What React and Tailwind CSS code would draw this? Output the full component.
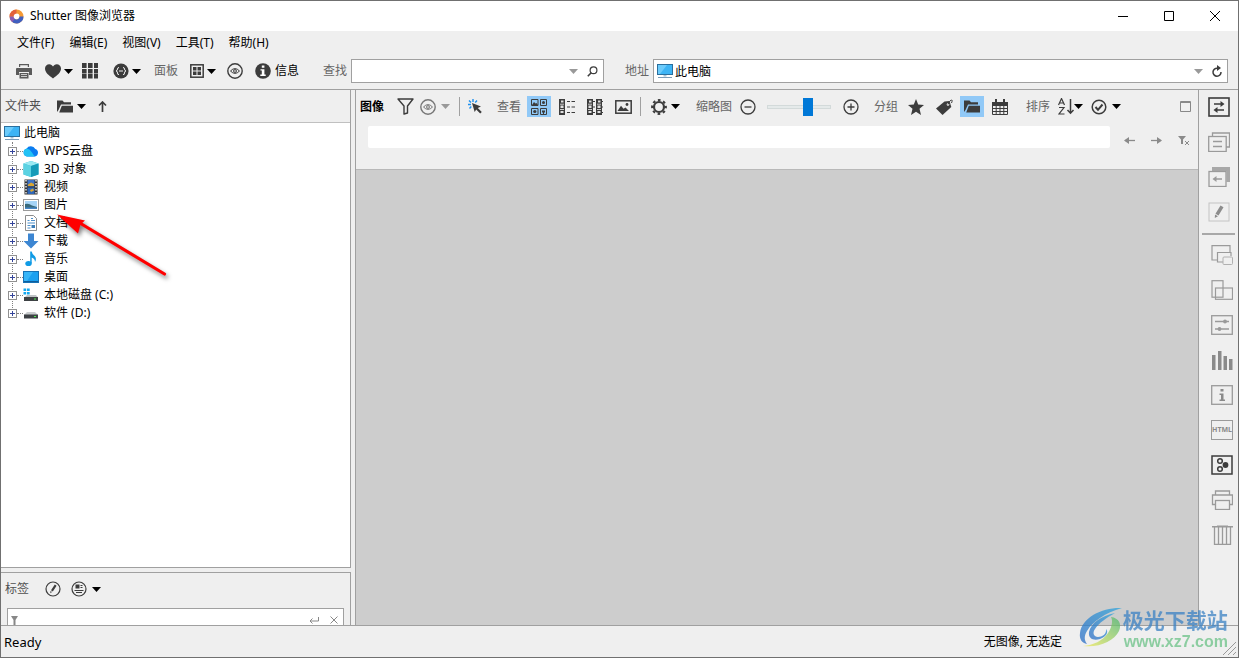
const MENUS = ["文件(F)", "编辑(E)", "视图(V)", "工具(T)", "帮助(H)"]

function Svg({ w = 16, h = 16, className = "", children }) {
  return (
    <svg width={w} height={h} viewBox={`0 0 ${w} ${h}`} fill="none" stroke="currentColor"
      aria-hidden="true" className={`block shrink-0 ${className}`}>
      {children}
    </svg>
  )
}

function Caret({ label, className = "text-black" }) {
  return (
    <button aria-label={label} className={className}>
      <Svg w={9} h={5}><path d="M0 0h9L4.500 5z" fill="currentColor" stroke="none" /></Svg>
    </button>
  )
}

/* ---------- toolbar icons ---------- */

function PrinterIcon() {
  return (
    <Svg className="text-[#5a5a5a]">
      <g fill="currentColor" stroke="none">
        <path d="M3 1h10v3h-1.200V2.200H4.200V4H3z" />
        <path d="M1 5h14q1 0 1 1v6h-3V9H3v3H0V6q0-1 1-1z" />
        <path d="M3.500 10h9v5.500h-9zM5 11.300v.8h6v-.8zM5 13.300v.8h6v-.8z" fillRule="evenodd" />
      </g>
    </Svg>
  )
}

function HeartIcon() {
  return (
    <Svg>
      <path d="M8 15.500C4 12.500 0 9.500 0 5.500 0 3 2 1.200 4.200 1.200 6 1.200 7.300 2.200 8 3.500 8.700 2.200 10 1.200 11.800 1.200 14 1.200 16 3 16 5.500c0 4-4 7-8 10z"
        fill="currentColor" stroke="none" />
    </Svg>
  )
}

function GridIcon() {
  return (
    <Svg>
      <g fill="currentColor" stroke="none">
        {[0, 6, 12].map((x) => [0, 6, 11].map((y) => (
          <rect key={`${x}-${y}`} x={x} y={y} width="4.600" height={y === 0 ? 5 : 4.500} />
        )))}
      </g>
    </Svg>
  )
}

function BracesIcon() {
  return (
    <Svg>
      <circle cx="8" cy="8" r="7.600" fill="currentColor" stroke="none" />
      <g stroke="#efefef">
        <path d="M6 4.500Q4.500 4.500 4.500 6T3 8q1.500 0 1.500 2T6 11.500M10 4.500q1.500 0 1.500 1.500T13 8q-1.500 0-1.500 2T10 11.500M6 8h4" />
      </g>
    </Svg>
  )
}

function PanelsIcon() {
  return (
    <Svg w={14} h={14}>
      <rect x=".8" y=".8" width="12.400" height="12.400" strokeWidth="1.500" />
      <path d="M3 3h3.500v3.500H3zM7.500 3H11v3.500H7.500zM3 7.500h3.500V11H3zM7.500 7.500H11V11H7.500z"
        fill="currentColor" stroke="none" />
    </Svg>
  )
}

function EyeIcon({ className }) {
  return (
    <Svg className={className}>
      <circle cx="8" cy="8" r="7.200" strokeWidth="1.400" />
      <path d="M3.500 8Q8 3.200 12.500 8 8 12.800 3.500 8z" />
      <circle cx="8" cy="8" r="1.400" />
    </Svg>
  )
}

function InfoIcon() {
  return (
    <Svg>
      <circle cx="8" cy="8" r="7.800" fill="currentColor" stroke="none" />
      <path d="M6.800 2.500h2.600v2.300H6.800zM5.500 6.200h3.900v5.300h1.300V13H5.300v-1.500h1.500V7.500H5.500z"
        fill="#fff" stroke="none" />
    </Svg>
  )
}

function SearchIcon() {
  return (
    <Svg w={11} h={11}>
      <circle cx="6.500" cy="4.200" r="3.400" strokeWidth="1.200" />
      <path d="M4.200 6.800.8 10.200" strokeWidth="1.600" />
    </Svg>
  )
}

function RefreshIcon() {
  return (
    <Svg w={10} h={12}>
      <path d="M5.500 3.200A4 4 0 1 0 9 7" strokeWidth="1.500" />
      <path d="M5 0v6l4-3z" fill="currentColor" stroke="none" />
    </Svg>
  )
}

function FolderIcon() {
  return (
    <Svg w={17} h={13}>
      <path d="M0 .5h5.500l1.500 1.800h7v2.200H4L1.500 10 0 12zM4.800 5.700H16v6.800H2.200z"
        fill="currentColor" stroke="none" />
    </Svg>
  )
}

function FunnelIcon() {
  return (
    <Svg w={17} h={17}>
      <path d="M1 1h15l-5.500 7v7L7 16V8z" strokeWidth="1.400" strokeLinejoin="round" />
    </Svg>
  )
}

function ClickIcon() {
  return (
    <Svg w={16} h={15}>
      <path d="M5 0v3M1 1.500l2 2M0 5.500h3M1.500 9.500l1.800-2M9 1.500 7.200 3.500" stroke="#1e90ee" strokeWidth="1.400" />
      <path d="M4 4l9 3.500-3.200 1.500 4 4-1.600 1.600-4-4L6.700 13z" fill="currentColor" stroke="none" />
    </Svg>
  )
}

function ThumbsIcon() {
  return (
    <Svg>
      <path d="M.5.500h6.500v6H.5zM9.500.500h6v6h-6zM.5 9.500H7v6H.5zM9.500 9.500h6v6h-6z" />
      <path d="M1 6l2-3 1.500 1.500L5.500 4 7 6z" fill="currentColor" stroke="none" />
      <g fill="currentColor" stroke="none">
        <circle cx="12.500" cy="3.500" r="1.500" />
        <circle cx="3.800" cy="12.500" r="1.600" />
        <path d="M11 11.500h3v1.500l-1 1v1h-1v-1l-1-1z" />
      </g>
    </Svg>
  )
}

function FilmCell({ x }) {
  return (
    <>
      <rect x={x} y="0" width="6" height="16" fill="currentColor" stroke="none" />
      <path d={`M${x + 2} 1.500h2.500v2H${x + 2}zM${x + 1.500} 6.500h3v2.500h-3zM${x + 1.500} 12h3v2h-3z`} fill="#e0e0e0" stroke="none" />
      <path d={`M${x + 1} 5.200h4M${x + 1} 10.500h4`} stroke="#efefef" strokeWidth=".8" />
    </>
  )
}

function DetailsIcon() {
  return (
    <Svg>
      <FilmCell x={0} />
      <path d="M8 2.500h3M12.500 2.500H16M8 8h3M12.500 8H16M8 13.500h3M12.500 13.500H16" strokeWidth="1.200" />
    </Svg>
  )
}

function TilesIcon() {
  return (
    <Svg>
      <FilmCell x={0} />
      <FilmCell x={9} />
      <path d="M6 2.500h2M6 8h2M6 13.500h2M15 2.500h1M15 8h1M15 13.500h1" strokeWidth="1.200" />
    </Svg>
  )
}

function PictureIcon() {
  return (
    <Svg w={17} h={14}>
      <rect x=".8" y=".8" width="15.400" height="12.400" strokeWidth="1.500" />
      <path d="M2.500 11 6 5.800l2.500 3L10.500 7.500 14 11z" fill="currentColor" stroke="none" />
      <circle cx="12" cy="4.500" r="1.400" fill="currentColor" stroke="none" />
    </Svg>
  )
}

function GearIcon() {
  return (
    <Svg>
      <circle cx="8" cy="8" r="5" strokeWidth="2.200" />
      <circle cx="8" cy="8" r="6.900" strokeWidth="2" strokeDasharray="2.700 2.720" strokeDashoffset="1.350" />
    </Svg>
  )
}

function ZoomCircle({ plus }) {
  return (
    <Svg>
      <circle cx="8" cy="8" r="7" strokeWidth="1.300" />
      <path d={plus ? "M4.500 8h7M8 4.500v7" : "M4.500 8h7"} strokeWidth="1.300" />
    </Svg>
  )
}

function StarIcon() {
  return (
    <Svg>
      <path d="M8 0l2.200 5.500 5.800.400-4.500 3.800L13 16l-5-3.300L3 16l1.500-6.300L0 5.900l5.800-.400z"
        fill="currentColor" stroke="none" />
    </Svg>
  )
}

function TagIcon() {
  return (
    <Svg w={17} h={16}>
      <path d="M8.500 2.500 13.500 2l1.800 6L6.500 16 0 9.500z" fill="currentColor" stroke="none" />
      <circle cx="12" cy="5.500" r="1.300" fill="#efefef" stroke="none" />
      <path d="M12 5.500Q13 2 15 1.200T15.500 4" />
    </Svg>
  )
}

function CalendarIcon() {
  return (
    <Svg>
      <path d="M.5 3.500h15v12H.5zM.5 6.500h15M.5 9.500h15M.5 12.500h15M4.200 6v9M8 6v9M11.800 6v9" />
      <path d="M0 3h16v3H0zM3 0h2v3H3zM11 0h2v3h-2z" fill="currentColor" stroke="none" />
    </Svg>
  )
}

function SortIcon() {
  return (
    <Svg w={17} h={17}>
      <path d="M.5 7 3.500.500 6.500 7M1.500 5h4M1 9.500h5L1 16h5.500" strokeWidth="1.200" />
      <path d="M12.500 1v14M9.500 12l3 3.200 3-3.200" strokeWidth="1.500" />
    </Svg>
  )
}

function CheckCircleIcon() {
  return (
    <Svg>
      <circle cx="8" cy="8" r="6.800" strokeWidth="1.500" />
      <path d="M4.500 8l2.500 2.800L11.500 5.500" strokeWidth="2" />
    </Svg>
  )
}

/* ---------- folder tree icons ---------- */

function MonitorIcon() {
  return (
    <svg width="16" height="16" viewBox="0 0 16 16" aria-hidden="true" className="shrink-0">
      <rect x=".5" y="1.500" width="15" height="10" fill="#3db4f5" stroke="#2a6f9e" />
      <path d="M1 2h9L3 11H1z" fill="#6ccbfb" />
      <path d="M6.500 12h3v1.500h-3z" fill="#a5c3d6" />
      <path d="M1 14.500h14" stroke="#7d9db8" />
    </svg>
  )
}

const TREE = [
  { name: "WPS云盘", icon: (
    <>
      <path d="M4 13.500a4 4 0 0 1-.5-7.800A5 5 0 0 1 12.300 6 3.900 3.900 0 0 1 12 13.500z" fill="#0a7cf0" />
      <path d="M4 13.500a4 4 0 0 1 0-7.900Q7 6 9 9.500t3 4z" fill="#21c2f5" />
    </>
  ) },
  { name: "3D 对象", icon: (
    <>
      <path d="M8 0l7.500 2.500v11L8 16 .5 13.500v-11z" fill="#2fb5cf" />
      <path d="M8 0l7.500 2.500L8 5 .5 2.500z" fill="#9be9f2" />
      <path d="M.5 2.500 8 5v11L.5 13.500z" fill="#5bd2e2" />
      <path d="M8 5l7.500-2.500v11L8 16z" fill="#169bb8" />
    </>
  ) },
  { name: "视频", icon: (
    <>
      <rect x="1.500" y=".5" width="13" height="15" fill="#333" />
      <path d="M4.500 1h7v6.500h-7z" fill="#3f74c7" />
      <path d="M4.500 8.500h7V15h-7z" fill="#2e67b8" />
      <path d="M5 5.500l3-2 3 1.500v2H5zM7 11l3-1.500 1 2-3 1.500z" fill="#d9a632" />
      <path d="M3 1v14M13 1v14" stroke="#fff" strokeWidth="1.300" strokeDasharray="1.500 1.500" />
    </>
  ) },
  { name: "图片", icon: (
    <>
      <rect x=".5" y="2.500" width="15" height="11" fill="#fff" stroke="#9a9a9a" />
      <path d="M2 4h12v8H2z" fill="#a5d4f7" />
      <path d="M2 7q4-1 7 1.500L14 10v2H2z" fill="#396a7c" />
      <path d="M2 10.500h12V12H2z" fill="#4687c8" />
    </>
  ) },
  { name: "文档", icon: (
    <>
      <path d="M2.500.500h8l3 3v12h-11z" fill="#fff" stroke="#8d8d8d" />
      <path d="M4.500 5.500h2M8 3.500h2M8 5.500h4M4.500 8h7.500M4.500 10.500h3M4.500 13h3" stroke="#4c8fc9" />
      <path d="M8.500 10h3.500v3H8.500z" fill="#3b7db8" />
    </>
  ) },
  { name: "下载", icon: <path d="M5 .5h6V8h4.500L8 15.500.5 8H5z" fill="#3c86d2" /> },
  { name: "音乐", icon: (
    <>
      <ellipse cx="5.500" cy="12.500" rx="3.200" ry="2.600" fill="#109be5" />
      <path d="M7.200 12.500V.5h1.500q.3 2.500 3 4.500 2.300 2.500.3 6 0-3.500-3.300-4.500v6z" fill="#109be5" />
    </>
  ) },
  { name: "桌面", icon: (
    <>
      <rect x=".5" y="2.500" width="15" height="11" fill="#1ba0f0" stroke="#1672b5" />
      <path d="M1 3h9L4 12H1z" fill="#38b6f8" />
      <path d="M1 12.500h14" stroke="#0e5d9b" />
    </>
  ) },
  { name: "本地磁盘 (C:)", icon: (
    <>
      <path d="M.5 1.500h2.700v2.500H.5zM4 1.500h2.700v2.500H4zM.5 5h2.700v2.500H.5zM4 5h2.700v2.500H4z" fill="#13a8f0" />
      <path d="M4 8h9l2 2.500H1.500z" fill="#bfc3c6" />
      <path d="M1 10h14v4H1z" fill="#3d4144" />
      <path d="M11 12h2" stroke="#4cf04c" />
    </>
  ) },
  { name: "软件 (D:)", icon: (
    <>
      <path d="M4 7h8l3 3H1z" fill="#c8cbcd" />
      <path d="M1 9.500h14v4H1z" fill="#3d4144" />
      <path d="M11 11.500h2" stroke="#4cf04c" />
    </>
  ) },
]

/* ---------- right hand tool strip ---------- */

const PANEL_TOOLS = [
  { name: "交换", className: "text-[#3c3c3c]", icon: (
    <>
      <rect x="1" y="1" width="20" height="18" strokeWidth="1.600" />
      <path d="M6 7h9M7 13h9" strokeWidth="1.600" />
      <path d="M12.500 4l4 3-4 3zM9.500 10l-4 3 4 3z" fill="currentColor" stroke="none" />
    </>
  ) },
  { name: "卡片", icon: (
    <>
      <path d="M4.500 4V1h17v14H18" strokeWidth="1.300" />
      <rect x=".7" y="4.500" width="17.500" height="15" strokeWidth="1.300" />
      <path d="M5 9.500h9M5 14.500h9" strokeWidth="1.300" />
    </>
  ) },
  { name: "返回", icon: (
    <>
      <path d="M4 0h18v15h-3.500V4H4z" fill="#a8a8a8" stroke="none" />
      <rect x="1" y="4.500" width="17" height="15" strokeWidth="1.300" />
      <path d="M6 12h8" strokeWidth="1.500" />
      <path d="M8.500 9v6L4.500 12z" fill="currentColor" stroke="none" />
    </>
  ) },
  { name: "编辑", icon: (
    <>
      <rect x="1" y="1" width="20" height="18" stroke="#c4c4c4" />
      <path d="M12.500 3.500l3 1.800-5 8.200-3-1.800zM7 12.500l3 1.800-3.200 1.700z" fill="#8c8c8c" stroke="none" />
    </>
  ) },
]

const INFO_TOOLS = [
  { name: "批量", icon: (
    <>
      <path d="M6 15H1V.7h18V7" strokeWidth="1.200" />
      <path d="M12 17H6.500V7.500H20V11" strokeWidth="1.200" />
      <rect x="12" y="12" width="9.500" height="7.500" rx="1" stroke="#b0b0b0" />
    </>
  ) },
  { name: "裁剪", icon: (
    <>
      <rect x="1" y=".7" width="11" height="16.500" strokeWidth="1.200" />
      <rect x="4.500" y="8" width="17" height="11.300" strokeWidth="1.200" />
    </>
  ) },
  { name: "调整", icon: (
    <>
      <rect x=".7" y=".7" width="20.600" height="18.600" strokeWidth="1.300" />
      <path d="M4 6.500h14M4 14h14" strokeWidth="1.300" />
      <circle cx="14" cy="6.500" r="1.900" fill="currentColor" stroke="none" />
      <circle cx="8.500" cy="14" r="1.900" fill="currentColor" stroke="none" />
    </>
  ) },
  { name: "直方图", icon: (
    <path d="M1 5h3.500v15H1zM7 1h3.500v19H7zM12.500 6H16v14h-3.500zM18 9h3.500v11H18z" fill="#8a8a8a" stroke="none" />
  ) },
  { name: "属性", icon: (
    <>
      <rect x=".7" y=".7" width="20.600" height="18.600" strokeWidth="1.300" />
      <path d="M9.500 4h3v2.500h-3zM8.500 8.500h4v6h1.500V16H8.500v-1.500H10V10H8.500z" fill="#8a8a8a" stroke="none" />
    </>
  ) },
  { name: "网页", html: true },
  { name: "颜色", className: "text-[#3c3c3c]", icon: (
    <>
      <rect x="1" y="1" width="20" height="18" strokeWidth="1.500" />
      <circle cx="9" cy="6" r="2.300" strokeWidth="1.500" />
      <circle cx="9" cy="14" r="2.300" strokeWidth="1.500" />
      <circle cx="14.500" cy="10" r="2.900" fill="currentColor" stroke="none" />
    </>
  ) },
  { name: "打印", icon: (
    <>
      <path d="M4.500 5V1h14v4M4.500 14.500H1.500V5h20v9.500h-3" strokeWidth="1.300" />
      <rect x="4.500" y="10.500" width="14" height="9" strokeWidth="1.300" />
    </>
  ) },
  { name: "删除", icon: (
    <>
      <path d="M1 1.700h21M6 1.200h11" strokeWidth="1.500" />
      <path d="M3.500 2v17.300h16V2M7.500 2v17M11.500 2v17M15.500 2v17" strokeWidth="1.300" />
    </>
  ) },
]

function ToolStrip({ tools }) {
  return tools.map((tool) => (
    <button key={tool.name} aria-label={tool.name}
      className={`flex h-[35px] items-center pb-0.5 ${tool.className || "text-[#9a9a9a]"}`}>
      {tool.html ? (
        <span className="flex h-5 w-[22px] items-center justify-center border border-[#9a9a9a]
          text-[7px] font-bold text-[#8a8a8a]">
          HTML
        </span>
      ) : (
        <Svg w={22} h={20}>{tool.icon}</Svg>
      )}
    </button>
  ))
}

function TitleBar() {
  return (
    <header className="flex h-[30px] shrink-0 items-center bg-white">
      <svg width="15" height="15" viewBox="0 0 15 15" aria-hidden="true" className="ml-2">
        <circle cx="7.500" cy="7.500" r="5" fill="none" stroke="#f59a35" strokeWidth="4" />
        <path d="M7.500 2.500A5 5 0 0 0 2.500 7.500" fill="none" stroke="#e2603c" strokeWidth="4" />
        <path d="M12.500 7.500A5 5 0 0 1 4 11" fill="none" stroke="#3f5fc0" strokeWidth="4" />
        <path d="M2.500 7.500A5 5 0 0 0 4.500 11.500" fill="none" stroke="#8a5bb5" strokeWidth="4" />
      </svg>
      <h1 className="ml-1.5 flex-1">Shutter 图像浏览器</h1>
      <button aria-label="最小化" className="flex h-full w-[46px] items-center justify-center">
        <Svg w={10} h={10}><path d="M0 5.500h10" /></Svg>
      </button>
      <button aria-label="最大化" className="flex h-full w-[46px] items-center justify-center">
        <Svg w={10} h={10}><path d="M.5.500h9v9h-9z" /></Svg>
      </button>
      <button aria-label="关闭" className="flex h-full w-[46px] items-center justify-center">
        <Svg w={10} h={10}><path d="M0 0l10 10M10 0 0 10" /></Svg>
      </button>
    </header>
  )
}

function MainToolbar() {
  return (
    <div className="flex h-[35px] shrink-0 items-center border-b border-[#a0a0a0] pb-0.5 pl-[15px] pr-2.5 text-[#3c3c3c]">
      <button aria-label="打印"><PrinterIcon /></button>
      <div className="ml-[13px] flex items-center gap-[3px]">
        <button aria-label="收藏"><HeartIcon /></button>
        <Caret label="收藏菜单" />
      </div>
      <button aria-label="网格" className="ml-[9px]"><GridIcon /></button>
      <div className="ml-[15px] flex items-center gap-[3px]">
        <button aria-label="脚本"><BracesIcon /></button>
        <Caret label="脚本菜单" />
      </div>
      <span className="ml-[13px] text-[#666]">面板</span>
      <div className="ml-3 flex items-center gap-[3px]">
        <button aria-label="布局"><PanelsIcon /></button>
        <Caret label="布局菜单" />
      </div>
      <button aria-label="预览" className="ml-[11px]"><EyeIcon /></button>
      <button className="ml-3 flex items-center gap-1">
        <InfoIcon />
        <span className="text-black">信息</span>
      </button>

      <label htmlFor="find" className="ml-6 shrink-0 text-[#666]">查找</label>
      <div className="ml-1 flex h-6 w-[253px] items-center border border-[#a0a0a0] bg-white">
        <input id="find" className="h-full min-w-0 flex-1 px-1 text-black outline-none" />
        <Caret label="查找历史" className="text-[#999]" />
        <button aria-label="查找" className="ml-[9px] mr-[5px]"><SearchIcon /></button>
      </div>

      <label htmlFor="address" className="ml-[21px] shrink-0 text-[#666]">地址</label>
      <div className="ml-1 flex h-6 flex-1 items-center border border-[#a0a0a0] bg-white pl-[3px]">
        <MonitorIcon />
        <input id="address" defaultValue="此电脑" className="h-full min-w-0 flex-1 pl-0.5 text-black outline-none" />
        <Caret label="地址历史" className="text-[#999]" />
        <button aria-label="刷新" className="ml-[9px] mr-[5px]"><RefreshIcon /></button>
      </div>
    </div>
  )
}

function FolderPanel() {
  return (
    <section className="relative flex min-h-0 flex-1 flex-col border-b border-r border-[#a0a0a0]">
      <div className="flex h-[33px] shrink-0 items-center border-b border-[#c0c0c0] pl-1 text-[#3c3c3c]">
        <h2 className="text-[#505050]">文件夹</h2>
        <button aria-label="文件夹" className="ml-4"><FolderIcon /></button>
        <Caret label="文件夹菜单" className="ml-[3px] text-black" />
        <button aria-label="上一级" className="ml-3">
          <Svg w={9} h={11}><path d="M4.500 11V1M1 4.500 4.500 1 8 4.500" strokeWidth="1.700" /></Svg>
        </button>
      </div>

      <div className="flex-1 bg-white pl-[3px] pt-px">
        <button className="flex h-[18px] items-center gap-1">
          <MonitorIcon />
          此电脑
        </button>
        <ul className="relative">
          <li aria-hidden="true" className="absolute bottom-2 left-2 top-0 border-l border-dotted border-[#808080]" />
          {TREE.map((node) => (
            <li key={node.name} className="relative flex h-[18px] items-center pl-1">
              <button aria-label={`展开 ${node.name}`}
                className="size-[9px] border border-[#919191] bg-white text-[#35459a]">
                <Svg w={7} h={7}><path d="M1 3.500h5M3.500 1v5" /></Svg>
              </button>
              <span className="w-1.5 border-t border-dotted border-[#808080]" />
              <button className="flex items-center gap-[5px]">
                <svg width="16" height="16" viewBox="0 0 16 16" aria-hidden="true" className="shrink-0">{node.icon}</svg>
                {node.name}
              </button>
            </li>
          ))}
        </ul>
      </div>

      {/* pointer over the tree */}
      <svg width="130" height="80" viewBox="0 0 130 80" aria-hidden="true"
        className="pointer-events-none absolute left-[50px] top-[118px] drop-shadow-[2px_3px_2px_rgba(0,0,0,0.5)]">
        <path d="M28 14.500 113.500 66" stroke="#f00" strokeWidth="3.200" strokeLinecap="round" />
        <path d="M6 6.500 34 12.500l-4.500 4-2.500 9z" fill="#f00" />
      </svg>
    </section>
  )
}

function TagPanel() {
  return (
    <section className="mt-1 h-[53px] shrink-0 overflow-hidden border-r border-t border-[#a0a0a0]">
      <div className="flex h-8 items-center pl-1 text-[#3c3c3c]">
        <h2 className="text-[#505050]">标签</h2>
        <button aria-label="编辑标签" className="ml-4">
          <Svg>
            <circle cx="8" cy="8" r="7" strokeWidth="1.200" />
            <path d="M9.800 3.500l1.800 1.300-3.800 5.700-1.800-1.300zM5.500 10l1.500 1-1.700 1.300z" fill="currentColor" stroke="none" />
          </Svg>
        </button>
        <button aria-label="标签视图" className="ml-2.5">
          <Svg>
            <circle cx="8" cy="8" r="7" strokeWidth="1.200" />
            <path d="M4.500 3.500h4v4h-4z" fill="currentColor" stroke="none" />
            <path d="M9.500 4.500h2M9.500 6.500h2M3.500 9.500h9M5 11.500h6" />
          </Svg>
        </button>
        <Caret label="标签菜单" className="ml-[5px] text-black" />
      </div>
      <div className="mx-1.5 mt-[3px] flex h-6 items-center border border-[#a0a0a0] bg-white pl-[3px] text-[#888]">
        <Svg w={7} h={9}><path d="M0 0h7L4.500 4v5h-2V4z" fill="currentColor" stroke="none" /></Svg>
        <input aria-label="筛选标签" className="h-full min-w-0 flex-1 px-1 text-black outline-none" />
        <button aria-label="应用">
          <Svg w={10} h={7}><path d="M9.500 0v4H1M3.500 1.500 1 4l2.500 2.500" /></Svg>
        </button>
        <button aria-label="清除" className="mx-[5px] pl-1.5">
          <Svg w={8} h={8}><path d="M.5.500l7 7M7.500.500l-7 7" /></Svg>
        </button>
      </div>
    </section>
  )
}

function Separator({ className }) {
  return <span className={`h-[19px] w-px bg-[#a0a0a0] ${className}`} />
}

function ImagePanel() {
  return (
    <main className="flex min-w-0 flex-1 flex-col border-l border-[#a0a0a0]">
      <div className="flex h-[33px] shrink-0 items-center overflow-hidden pl-1 text-[#3c3c3c]">
        <h2 className="shrink-0 font-bold text-black">图像</h2>
        <button aria-label="筛选" className="ml-[13px]"><FunnelIcon /></button>
        <button aria-label="显示" className="ml-1.5"><EyeIcon className="text-[#777]" /></button>
        <Caret label="显示菜单" className="ml-[5px] text-[#999]" />
        <Separator className="ml-[9px]" />
        <button aria-label="选择" className="ml-2"><ClickIcon /></button>
        <span className="ml-[13px] shrink-0 text-[#666]">查看</span>
        <button aria-label="缩略图视图" className="ml-1.5 flex h-[21px] w-6 items-center justify-center bg-[#91c9f7]">
          <ThumbsIcon />
        </button>
        <div className="ml-2 flex items-center gap-3">
          <button aria-label="详细视图"><DetailsIcon /></button>
          <button aria-label="平铺视图"><TilesIcon /></button>
          <button aria-label="单图视图"><PictureIcon /></button>
        </div>
        <Separator className="ml-2" />
        <button aria-label="设置" className="ml-2.5"><GearIcon /></button>
        <Caret label="设置菜单" className="ml-1 text-black" />
        <label htmlFor="thumb-size" className="ml-4 shrink-0 text-[#666]">缩略图</label>
        <button aria-label="缩小" className="ml-2"><ZoomCircle /></button>
        <input id="thumb-size" type="range" defaultValue="67"
          className="ml-[11px] h-[18px] w-16 appearance-none bg-transparent
            [&::-webkit-slider-runnable-track]:h-1 [&::-webkit-slider-runnable-track]:border
            [&::-webkit-slider-runnable-track]:border-[#d3dada] [&::-webkit-slider-runnable-track]:bg-[#e5eaea]
            [&::-webkit-slider-thumb]:-mt-2 [&::-webkit-slider-thumb]:h-[18px] [&::-webkit-slider-thumb]:w-2.5
            [&::-webkit-slider-thumb]:appearance-none [&::-webkit-slider-thumb]:bg-[#0078d7]" />
        <button aria-label="放大" className="ml-3"><ZoomCircle plus /></button>
        <span className="ml-[15px] shrink-0 text-[#666]">分组</span>
        <button aria-label="按评级分组" className="ml-2.5"><StarIcon /></button>
        <button aria-label="按标签分组" className="ml-3"><TagIcon /></button>
        <button aria-label="按文件夹分组" className="ml-[7px] flex h-[21px] w-6 items-center justify-center bg-[#91c9f7]">
          <FolderIcon />
        </button>
        <button aria-label="按日期分组" className="ml-2"><CalendarIcon /></button>
        <span className="ml-[18px] shrink-0 text-[#666]">排序</span>
        <button aria-label="排序方式" className="ml-2"><SortIcon /></button>
        <Caret label="排序菜单" className="-ml-px text-black" />
        <button aria-label="选定" className="ml-2"><CheckCircleIcon /></button>
        <Caret label="选定菜单" className="ml-[5px] text-black" />
        <button aria-label="最大化面板" className="ml-auto mr-[7px] text-[#888]">
          <Svg w={11} h={11}><path d="M.5.500h10v10H.5zM0 1.500h11" /></Svg>
        </button>
      </div>

      <div className="flex h-[47px] shrink-0 items-start border-b border-[#b8b8b8] pl-3 pt-[3px] text-[#8a8a8a]">
        <input aria-label="筛选条件" className="h-[22px] min-w-0 flex-1 rounded-xs bg-white px-1 text-black outline-none" />
        <div className="mt-[9px] flex gap-4 pl-3.5 pr-2">
          <button aria-label="后退">
            <Svg w={11} h={11}><path d="M1 5.500h10" strokeWidth="1.300" /><path d="M5 2v7L0 5.500z" fill="currentColor" stroke="none" /></Svg>
          </button>
          <button aria-label="前进">
            <Svg w={11} h={11}><path d="M0 5.500h10" strokeWidth="1.300" /><path d="M6 2v7l5-3.500z" fill="currentColor" stroke="none" /></Svg>
          </button>
          <button aria-label="清除筛选">
            <Svg w={12} h={11}>
              <path d="M0 1h8L5 4.500V9H3V4.500z" fill="currentColor" stroke="none" />
              <path d="M7 6l4 4M11 6l-4 4" />
            </Svg>
          </button>
        </div>
      </div>

      <div className="flex-1 bg-[#cdcdcd]" />
    </main>
  )
}

function Watermark() {
  return (
    <div className="pointer-events-none absolute bottom-[7px] right-2.5 flex items-center opacity-75">
      <svg width="44" height="42" viewBox="0 0 44 42" aria-hidden="true">
        <defs>
          <linearGradient id="wave-blue" x1="0" y1="1" x2="1" y2="0">
            <stop offset="0" stopColor="#2b6cc4" />
            <stop offset="1" stopColor="#2fa5dd" />
          </linearGradient>
          <linearGradient id="wave-green" x1="0" y1="1" x2="1" y2="0">
            <stop offset="0" stopColor="#f3ea5a" />
            <stop offset="1" stopColor="#4db870" />
          </linearGradient>
        </defs>
        <path d="M43 1C24 0 3 10 1 26c-1 6 2 10 7 11-3-4-3-8 0-13C14 14 26 6 43 1z" fill="url(#wave-blue)" />
        <path d="M36 6C22 9 12 16 10 25c-1 7 5 9 11 7 6-2 9-7 6-10 1 5-4 8-8 8-4 0-6-4-3-8 4-6 11-11 20-16z" fill="url(#wave-blue)" />
        <path d="M32 10c8 1 11 7 8 14C35 34 20 41 4 39c10-1 20-5 25-13 4-6 5-12 3-16z" fill="url(#wave-green)" />
      </svg>
      <div className="flex flex-col">
        <span className="text-[21px] font-bold leading-7 text-[#3b82c4]">极光下载站</span>
        <span className="pl-px font-['Liberation_Sans'] text-[16px] font-bold leading-4 text-[#6cc287]">www.xz7.com</span>
      </div>
    </div>
  )
}

function StatusBar() {
  return (
    <footer className="flex h-8 shrink-0 items-center border-t border-[#a0a0a0] pl-[3px]">
      <span className="flex-1 text-[13px]">Ready</span>
      <span className="mr-44">无图像, 无选定</span>
      <Svg w={13} h={13} className="absolute bottom-0.5 right-0.5 text-[#999]">
        <path d="M0 13 13 0M5 13l8-8M10 13l3-3" />
      </Svg>
    </footer>
  )
}

export default function App() {
  return (
    <div className="relative flex h-screen w-full flex-col overflow-hidden border border-[#707070] bg-[#efefef]
      font-['Noto_Sans','Noto_Sans_CJK_SC',sans-serif] text-[12px] leading-4 text-black">
      <TitleBar />
      <nav className="flex h-6 shrink-0 items-center gap-[15px] pl-4">
        {MENUS.map((menu) => <button key={menu}>{menu}</button>)}
      </nav>
      <MainToolbar />

      <div className="flex min-h-0 flex-1">
        <aside className="mr-1 flex w-[350px] shrink-0 flex-col">
          <FolderPanel />
          <TagPanel />
        </aside>
        <ImagePanel />
        <aside className="flex w-10 shrink-0 flex-col border-l border-[#a0a0a0]">
          <div className="pl-[9px]"><ToolStrip tools={PANEL_TOOLS} /></div>
          <hr className="mx-[3px] my-[3px] border-t-2 border-[#a8a8a8]" />
          <div className="pl-3"><ToolStrip tools={INFO_TOOLS} /></div>
        </aside>
      </div>

      <StatusBar />
      <Watermark />
    </div>
  )
}
